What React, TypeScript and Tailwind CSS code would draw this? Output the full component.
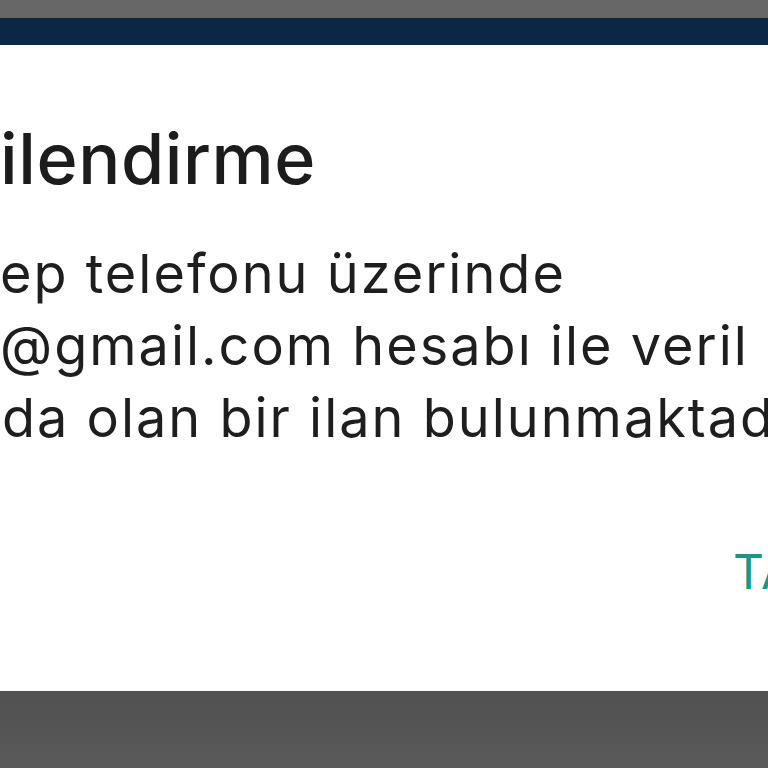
export default function App() {
  const font = { fontFamily: 'Inter, "Noto Sans", Roboto, sans-serif' };
  return (
    <div className="flex h-screen w-full flex-col overflow-hidden bg-white" style={font}>
      <div className="h-[18px] shrink-0 bg-[#676767]" />
      <div className="h-[27px] shrink-0 bg-[#0c2646]" />
      <div className="flex flex-1 flex-col overflow-hidden pt-[72px]">
        <h1 className="whitespace-nowrap text-[70px] font-medium leading-[84px] tracking-[0.6px] text-[#1c1c1c]">
          ilendirme
        </h1>
        <div className="mt-[37px] whitespace-nowrap text-[54px] leading-[72px] tracking-[2px] text-[#1e1e1e]">
          <p>ep telefonu üzerinde</p>
          <p>@gmail.com hesabı ile veril</p>
          <p className="pl-[2px]">da olan bir ilan bulunmaktad</p>
        </div>
        <div className="mt-[90px] whitespace-nowrap pl-[733px] text-[48px] leading-[56px] tracking-[1px] text-[#17978a]">
          TAMAM
        </div>
      </div>
      <div className="h-[77px] shrink-0 bg-gradient-to-b from-[#505050] to-[#5a5a5a]" />
    </div>
  );
}
